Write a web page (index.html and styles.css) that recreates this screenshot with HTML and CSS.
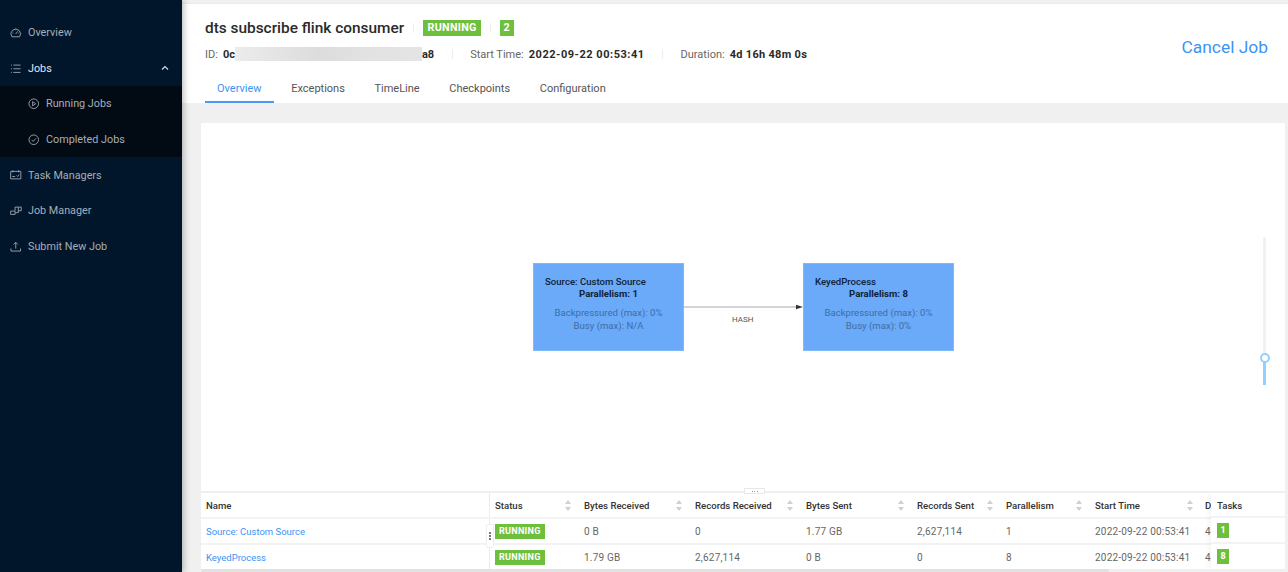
FILE: index.html
```html
<!DOCTYPE html>
<html lang="en">
<head>
<meta charset="utf-8">
<title>Flink Job</title>
<link rel="stylesheet" href="styles.css">
</head>
<body>
<div class="app">
  <aside class="sidebar">
    <nav class="menu">
      <a class="item"><svg class="ico" viewBox="0 0 12 12"><path d="M2 10.2A5 5 0 1 1 10 10.2Z"/><path d="M6 7.2 8 4.6M2.6 6.4h.8M8.8 6.4h.8M6 2.6v.8"/></svg><span>Overview</span></a>
      <a class="item open"><svg class="ico" viewBox="0 0 12 12"><path d="M3.5 2.2H11M3.5 6H11M3.5 9.8H11M1 2.2h1M1 6h1M1 9.8h1"/></svg><span>Jobs</span><svg class="chev" viewBox="0 0 8 6"><path d="M1 4.5 4 1.5 7 4.5"/></svg></a>
      <div class="submenu">
        <a class="item sub"><svg class="ico" viewBox="0 0 12 12"><circle cx="6" cy="6" r="5"/><path d="M4.8 3.8 8 6 4.8 8.2Z"/></svg><span>Running Jobs</span></a>
        <a class="item sub"><svg class="ico" viewBox="0 0 12 12"><circle cx="6" cy="6" r="5"/><path d="M3.8 6.2 5.4 7.8 8.3 4.5"/></svg><span>Completed Jobs</span></a>
      </div>
      <a class="item"><svg class="ico" viewBox="0 0 12 12"><path d="M.7 2.5h10.6v7.8H.7ZM3 1.3v2.2M9 1.3v2.2M2.4 7.8h3M7 6.8l1 1 1.6-2"/></svg><span>Task Managers</span></a>
      <a class="item"><svg class="ico" viewBox="0 0 12 12"><path d="M.7 6.3h4.6v3.5H.7ZM5.5 8h3.2V2.2h3V6H8.7M8.7 2.2H5.3v3.6"/></svg><span>Job Manager</span></a>
      <a class="item"><svg class="ico" viewBox="0 0 12 12"><path d="M6 8V1.6M3.8 3.6 6 1.4l2.2 2.2M1 7.8v2.7h10V7.8"/></svg><span>Submit New Job</span></a>
    </nav>
  </aside>
  <main class="main">
    <header class="head">
      <div class="head-top">
        <div class="head-info">
          <div class="title-row">
            <h1 class="title">dts subscribe flink consumer</h1>
            <i class="sep"></i>
            <span class="tag tag-lg">RUNNING</span>
            <i class="sep"></i>
            <span class="tag tag-lg tag-num">2</span>
          </div>
          <div class="meta-row">
            <span class="meta-label">ID:</span>
            <b class="meta-id">0c<span class="blur"></span>a8</b>
            <i class="sep sep-meta"></i>
            <span class="meta-label">Start Time:</span>
            <b class="meta-val meta-time">2022-09-22 00:53:41</b>
            <i class="sep sep-meta"></i>
            <span class="meta-label">Duration:</span>
            <b class="meta-val">4d 16h 48m 0s</b>
          </div>
        </div>
        <a class="cancel">Cancel Job</a>
      </div>
      <div class="tabs">
        <a class="tab active">Overview</a>
        <a class="tab">Exceptions</a>
        <a class="tab">TimeLine</a>
        <a class="tab">Checkpoints</a>
        <a class="tab">Configuration</a>
      </div>
    </header>
    <section class="content">
      <div class="card">
        <div class="graph">
          <div class="node node-a">
            <div class="node-title">Source: Custom Source</div>
            <div class="node-par">Parallelism: 1</div>
            <div class="node-stat">Backpressured (max): 0%<br>Busy (max): N/A</div>
          </div>
          <div class="node node-b">
            <div class="node-title">KeyedProcess</div>
            <div class="node-par">Parallelism: 8</div>
            <div class="node-stat">Backpressured (max): 0%<br>Busy (max): 0%</div>
          </div>
          <svg class="edge" viewBox="0 0 119 10"><path d="M0 5H113" class="edge-line"/><path d="M112 2.8 119 5 112 7.2Z" class="edge-head"/></svg>
          <span class="edge-label">HASH</span>
          <div class="zoom"><div class="zoom-track"></div><div class="zoom-fill"></div><div class="zoom-handle"></div></div>
        </div>
        <div class="split"><span class="split-handle"><i></i><i></i><i></i></span></div>
        <div class="table-wrap">
          <table class="table">
            <colgroup>
              <col class="c-name"><col class="c-st"><col class="c-l"><col class="c-l"><col class="c-l"><col class="c-s"><col class="c-s"><col class="c-l"><col class="c-d">
            </colgroup>
            <thead>
              <tr>
                <th>Name</th>
                <th><div class="th"><span>Status</span><span class="sort"></span></div></th>
                <th><div class="th"><span>Bytes Received</span><span class="sort"></span></div></th>
                <th><div class="th"><span>Records Received</span><span class="sort"></span></div></th>
                <th><div class="th"><span>Bytes Sent</span><span class="sort"></span></div></th>
                <th><div class="th"><span>Records Sent</span><span class="sort"></span></div></th>
                <th><div class="th"><span>Parallelism</span><span class="sort"></span></div></th>
                <th><div class="th"><span>Start Time</span><span class="sort"></span></div></th>
                <th class="cell-d">D</th>
              </tr>
            </thead>
            <tbody>
              <tr>
                <td><a class="link">Source: Custom Source</a></td>
                <td><span class="tag">RUNNING</span></td>
                <td>0 B</td><td>0</td><td>1.77 GB</td><td>2,627,114</td><td>1</td><td>2022-09-22 00:53:41</td><td class="cell-d">4</td>
              </tr>
              <tr>
                <td><a class="link">KeyedProcess</a></td>
                <td><span class="tag">RUNNING</span></td>
                <td>1.79 GB</td><td>2,627,114</td><td>0 B</td><td>0</td><td>8</td><td>2022-09-22 00:53:41</td><td class="cell-d">4</td>
              </tr>
            </tbody>
          </table>
          <div class="fixed-col">
            <div class="fixed-head">Tasks</div>
            <div class="fixed-cell"><span class="tag tag-num">1</span></div>
            <div class="fixed-cell"><span class="tag tag-num">8</span></div>
          </div>
          <div class="resizer"><i></i><i></i><i></i></div>
        </div>
        <div class="hscroll"><div class="hthumb"></div></div>
      </div>
    </section>
  </main>
</div>
</body>
</html>
```
FILE: styles.css
```css
* { box-sizing: border-box; }
html, body { margin: 0; height: 100%; overflow: hidden; }
body { font-family: Roboto, "Liberation Sans", sans-serif; color: #333; background: #f0f0f0; }
a { cursor: pointer; }

.app { display: flex; height: 572px; }

.sidebar { width: 182px; flex: none; background: #02162b; box-shadow: 2px 0 6px rgba(0,0,0,.25); z-index: 2; }
.menu { display: flex; flex-direction: column; padding-top: 15px; }
.item { display: flex; align-items: center; height: 35.6px; padding-left: 10px; color: #a5aeb8; font-size: 10.8px; }
.item.open { color: #e3e6ea; }
.ico { width: 11.5px; height: 11.5px; margin-right: 6.5px; fill: none; stroke: currentColor; stroke-width: .9; flex: none; }
.item .ico { color: #a5aeb8; }
.chev { width: 8px; height: 6px; margin-left: auto; margin-right: 13px; fill: none; stroke: #d5d9de; stroke-width: 1.2; }
.submenu { background: #020b14; }
.sub { padding-left: 28px; }

.main { flex: 1; min-width: 0; display: flex; flex-direction: column; }
.head { height: 100px; margin-top: 3px; background: #fff; padding: 0 20px 0 23px; border-top: 1px solid #ececec; flex: none; }
.head-top { display: flex; justify-content: space-between; align-items: flex-start; height: 70px; padding-top: 15px; }
.title-row { display: flex; align-items: center; height: 18px; margin-bottom: 9px; }
.title { margin: 0; font-size: 15.4px; line-height: 18px; font-weight: 500; color: #2a2a2a; }
.sep { width: 1px; height: 10px; background: #eee; margin: 0 9px; }
.tag { display: inline-block; background: #6fbf3f; color: #fff; font-weight: 700; font-size: 9px; line-height: 15px; height: 15px; padding: 0 4.5px; letter-spacing: .3px; }
.tag-lg { font-size: 10.7px; height: 16px; line-height: 16px; }
.tag-num { padding: 0 3.5px; }
.meta-row { display: flex; align-items: center; height: 16px; font-size: 11px; }
.meta-label { color: #666; margin-right: 5px; }
.meta-id { font-weight: 700; color: #2a2a2a; display: flex; align-items: center; }
.blur { width: 187px; height: 14px; background: linear-gradient(90deg, #ececec, #dcdcdc 45%, #e2e2e2 70%, #e4e4e4); filter: blur(.6px); }
.meta-val { font-weight: 700; color: #2a2a2a; letter-spacing: .3px; }
.meta-time { letter-spacing: .52px; }
.sep-meta { margin: 0 17.5px; }
.cancel { color: #3d93f6; font-size: 17.4px; line-height: 21px; margin-top: 18px; }

.tabs { display: flex; height: 29px; }
.tab { font-size: 11px; color: #555; padding: 0 12.5px; height: 29px; line-height: 29px; margin-right: 4.6px; }
.tab.active { color: #3d93f6; border-bottom: 2px solid #4a9bf8; }
.tab:first-child { margin-left: -.5px; }

.content { flex: 1; min-height: 0; padding: 20px 3px 0 19px; }
.card { background: #fff; height: 449px; display: flex; flex-direction: column; }

.graph { position: relative; height: 368px; flex: none; }
.node { position: absolute; top: 140px; width: 151px; height: 88px; background: #6aaaf8; border: 1px solid #7fb8fb; font-size: 9.6px; line-height: 12.2px; padding-top: 12px; color: #0f2238; }
.node-a { left: 332px; }
.node-b { left: 602px; }
.node-title { padding-left: 11px; font-weight: 500; }
.node-par { padding-left: 45px; font-weight: 700; }
.node-stat { margin-top: 7px; text-align: center; color: #3f6da6; }
.edge { position: absolute; left: 483px; top: 179px; width: 119px; height: 10px; }
.edge-line { stroke: #aaa; stroke-width: 1; fill: none; }
.edge-head { fill: #333; }
.edge-label { position: absolute; left: 531px; top: 192px; font-size: 8px; line-height: 10px; color: #555; }
.zoom { position: absolute; left: 1058.5px; top: 114px; width: 10px; height: 149px; }
.zoom-track { position: absolute; left: 3.5px; top: 0; width: 3px; height: 120px; background: #f2f2f2; }
.zoom-fill { position: absolute; left: 3.5px; top: 120px; width: 3px; height: 28px; background: #91d0ff; }
.zoom-handle { position: absolute; left: 0; top: 116px; width: 10px; height: 10px; border-radius: 50%; border: 2px solid #91d0ff; background: #fff; }

.split { position: relative; height: 2px; background: #efefef; flex: none; }
.split-handle { position: absolute; left: 543px; top: -3px; width: 21px; height: 6px; background: #fff; border: 1px solid #e8e8e8; display: flex; justify-content: center; align-items: center; gap: 1.5px; }
.split-handle i { width: 1px; height: 1px; background: #999; }

.table-wrap { position: relative; height: 76px; overflow: hidden; display: block; }
.table { border-collapse: collapse; table-layout: fixed; width: 1010px; font-size: 10px; }
.c-name { width: 288.5px; } .c-st { width: 89.5px; } .c-s { width: 89px; } .c-l { width: 111px; } .c-d { width: 10px; }
.table th, .table td { height: 26px; padding: 0 5px; text-align: left; border-bottom: 2px solid #f3f3f3; white-space: nowrap; overflow: hidden; }
.table th { font-weight: 500; color: #333; height: 25px; font-size: 9.6px; }
.table td { color: #666; letter-spacing: .2px; }
.table th:first-child, .table td:first-child { padding-left: 5px; border-right: 1px solid #ececec; }
.table .cell-d { padding: 0 0 0 4px; }
.table tr:last-child td { border-bottom: 0; height: 25px; }
.table .tag { margin-left: -.5px; }
.th { display: flex; justify-content: space-between; align-items: center; padding-right: 3px; }
.sort { width: 6px; height: 11px; flex: none; position: relative; }
.sort::before, .sort::after { content: ""; position: absolute; left: 0; border-left: 3px solid transparent; border-right: 3px solid transparent; }
.sort::before { top: 0; border-bottom: 4px solid #d0d0d0; }
.sort::after { bottom: 0; border-top: 4px solid #d0d0d0; }
.link { color: #3d93f6; font-size: 9.5px; letter-spacing: 0; }

.fixed-col { position: absolute; right: 0; top: 0; width: 74px; height: 100%; background: #fff; box-shadow: -3px 0 5px rgba(0,0,0,.04); font-size: 9.6px; }
.fixed-head { height: 25px; line-height: 25px; padding-left: 6px; font-weight: 500; border-bottom: 2px solid #f3f3f3; }
.fixed-cell { height: 26px; display: flex; align-items: center; padding-left: 6px; border-bottom: 2px solid #f3f3f3; }
.fixed-cell:last-child { border-bottom: 0; height: 25px; }

.resizer { position: absolute; left: 285px; top: 31px; width: 8px; height: 24px; background: #fff; border: 1px solid #eee; border-radius: 2px; display: flex; flex-direction: column; justify-content: center; align-items: center; gap: 1.5px; }
.resizer i { width: 1.5px; height: 1.5px; background: #777; }

.hscroll { flex: 1; background: #f0f0f0; }
.hthumb { width: 908px; height: 3px; background: #e2e2e2; }
```
